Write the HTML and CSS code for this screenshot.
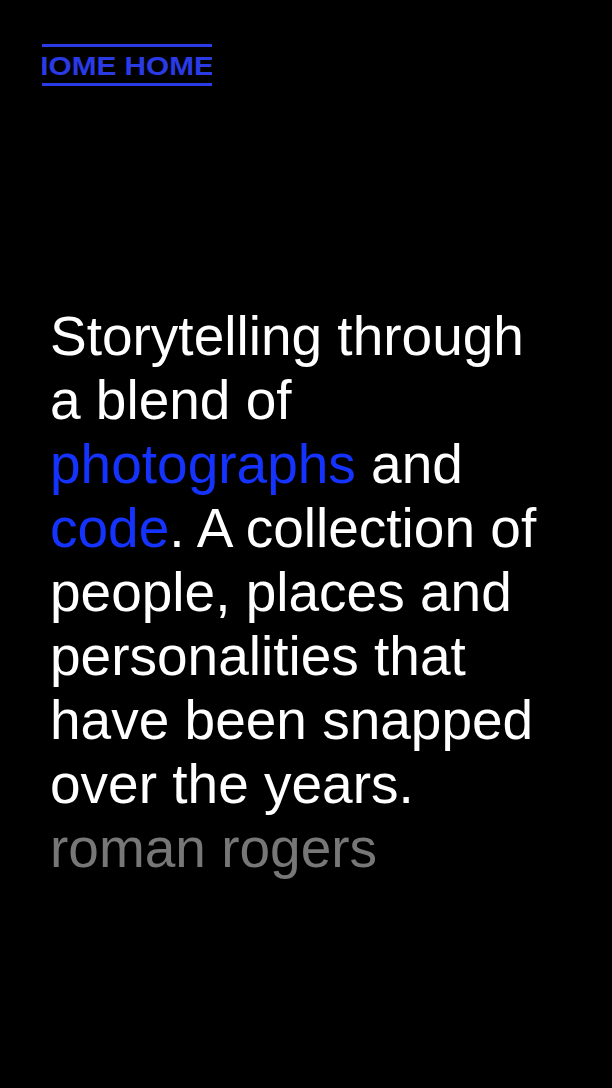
FILE: index.html
```html
<!DOCTYPE html>
<html>
<head>
<meta charset="utf-8">
<link rel="stylesheet" href="styles.css">
</head>
<body>
<header class="top">
  <a class="logo" href="#"><span class="logo-track">HOME HOME HOME</span></a>
</header>
<main class="intro">
  <p class="lead">Storytelling through a blend of <span class="hl">photographs</span> and <span class="hl">code</span>. A collection of people, places and personalities that have been snapped over the years.</p>
  <p class="author">roman rogers</p>
</main>
</body>
</html>
```

FILE: styles.css
```css
html, body {
  margin: 0;
  padding: 0;
  background: #000;
}
body {
  font-family: "Liberation Sans", Arial, Helvetica, sans-serif;
  color: #fff;
}
.top {
  padding: 44px 0 0 42px;
}
.logo {
  display: block;
  width: 170px;
  height: 36px;
  border-top: 3px solid #2a3be6;
  border-bottom: 3px solid #2a3be6;
  overflow: hidden;
  white-space: nowrap;
  text-decoration: none;
  color: #2a3be6;
  font-weight: bold;
  font-size: 26px;
  line-height: 38px;
}
.logo-track {
  display: inline-block;
  margin-left: -15px;
  transform: scaleX(1.145);
  transform-origin: left center;
}
.intro {
  padding: 218px 50px 0 50px;
  width: 512px;
}
.lead, .author {
  margin: 0;
  font-size: 55px;
  line-height: 64px;
}
.hl {
  color: #1533ff;
}
.author {
  color: #777;
}
```
